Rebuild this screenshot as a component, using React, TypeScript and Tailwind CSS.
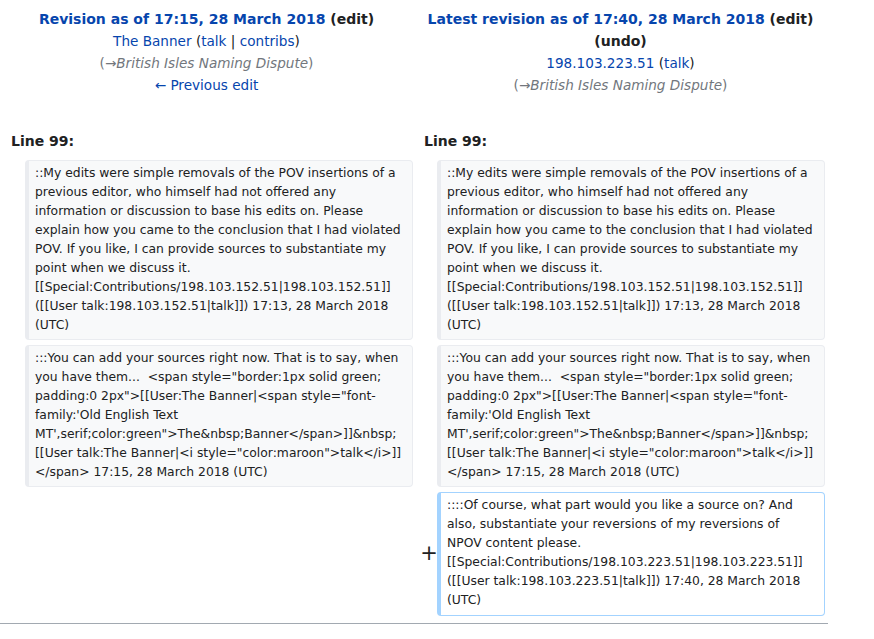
import React from "react";

const font = { fontFamily: '"DejaVu Sans", Verdana, sans-serif' };

function Ctx({ children }: { children: React.ReactNode }) {
  return (
    <div className="rounded-[4px] border border-[#eaecf0] border-l-4 bg-[#f8f9fa] pl-[6px] pr-2 pt-[3px] pb-[4px] text-[12.35px] leading-[19px] text-[#202122] break-words">
      {children}
    </div>
  );
}

function Added({ children }: { children: React.ReactNode }) {
  return (
    <div className="rounded-[4px] border border-[#a3d3ff] border-l-4 bg-white pl-[6px] pr-2 pt-[3px] pb-[5px] text-[12.35px] leading-[19px] text-[#202122] break-words">
      {children}
    </div>
  );
}

const t1 = (
  <>
    ::My edits were simple removals of the POV insertions of a previous editor, who himself had not offered any
    information or discussion to base his edits on. Please explain how you came to the conclusion that I had violated
    POV. If you like, I can provide sources to substantiate my point when we discuss it.
    [[Special:Contributions/198.103.152.51|198.103.152.51]] ([[User talk:198.103.152.51|talk]]) 17:13, 28 March 2018
    (UTC)
  </>
);

const t2 = (
  <>
    :::You can add your sources right now. That is to say, when you have them... &nbsp;&lt;span style="border:1px solid
    green; padding:0 2px"&gt;[[User:The Banner|&lt;span style="font-family:'Old English Text
    MT',serif;color:green"&gt;The&amp;nbsp;Banner&lt;/span&gt;]]&amp;nbsp; [[User talk:The Banner|&lt;i
    style="color:maroon"&gt;talk&lt;/i&gt;]] &lt;/span&gt; 17:15, 28 March 2018 (UTC)
  </>
);

const t3 = (
  <>
    ::::Of course, what part would you like a source on? And also, substantiate your reversions of my reversions of
    <br />
    NPOV content please. [[Special:Contributions/198.103.223.51|198.103.223.51]] ([[User
    talk:198.103.223.51|talk]]) 17:40, 28 March 2018 (UTC)
  </>
);

export default function App() {
  const link = "text-[#0645ad]";
  return (
    <div className="w-[874px] h-[639px] bg-white overflow-hidden" style={font}>
      <div className="w-[828px]">
        <div className="grid grid-cols-[413px_415px] pt-[8px] text-[14px] leading-[22px] text-[#202122] text-center">
          <div>
            <div className="font-bold">
              <span className={link}>Revision as of 17:15, 28 March 2018</span> (edit)
            </div>
            <div className="text-[13.6px]">
              <span className={link}>The Banner</span> (<span className={link}>talk</span> |{" "}
              <span className={link}>contribs</span>)
            </div>
            <div className="text-[13.6px] text-[#72777d]">
              (→<i>British Isles Naming Dispute</i>)
            </div>
            <div className={`text-[13.6px] ${link}`}>← Previous edit</div>
          </div>
          <div>
            <div className="font-bold">
              <span className={link}>Latest revision as of 17:40, 28 March 2018</span> (edit)
            </div>
            <div className="font-bold">(undo)</div>
            <div className="text-[13.6px]">
              <span className={link}>198.103.223.51</span> (<span className={link}>talk</span>)
            </div>
            <div className="text-[13.6px] text-[#72777d]">
              (→<i>British Isles Naming Dispute</i>)
            </div>
          </div>
        </div>

        <div className="grid grid-cols-[413px_415px] mt-[34px] text-[14px] leading-[22px] font-bold text-[#202122]">
          <div className="pl-[11px]">Line 99:</div>
          <div className="pl-[11px]">Line 99:</div>
        </div>

        <div className="grid grid-cols-[25px_388px_24px_388px] gap-y-[5px] mt-[8px] pb-[7px] border-b border-[#a2a9b1]">
          <div />
          <Ctx>{t1}</Ctx>
          <div />
          <Ctx>{t1}</Ctx>

          <div />
          <Ctx>{t2}</Ctx>
          <div />
          <Ctx>{t2}</Ctx>

          <div />
          <div />
          <div className="flex items-center justify-center pl-[8px] text-[21px] text-[#202122]">+</div>
          <Added>{t3}</Added>
        </div>
      </div>
    </div>
  );
}
